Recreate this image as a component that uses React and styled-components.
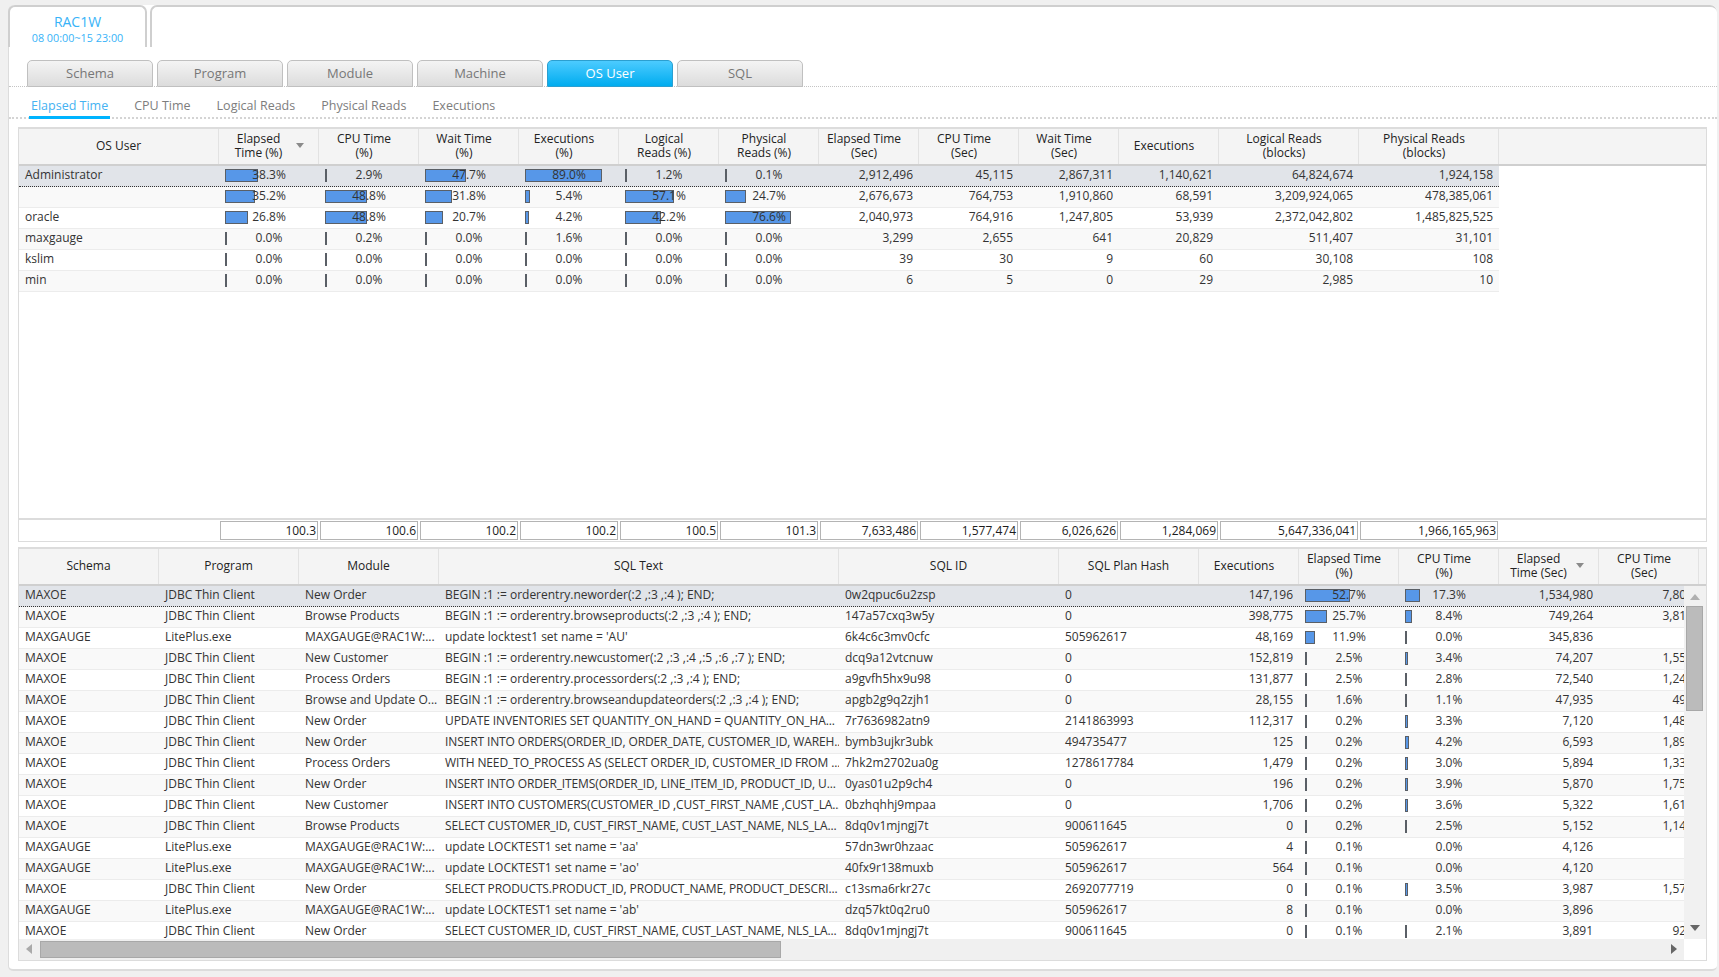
import styled, {createGlobalStyle} from "styled-components";

const GlobalStyle = createGlobalStyle`
  html, body {
    margin: 0;
    padding: 0;
    background: #f0f0f0;
    overflow: hidden;
  }
  * {
    box-sizing: border-box;
  }
`

const Page = styled.div`
  position: relative;
  width: 1719px;
  height: 977px;
  font-family: "Open Sans", "Noto Sans", sans-serif;
  font-size: 12px;
  color: #333;
`

const Panel = styled.div`
  position: absolute;
  left: 8px;
  top: 5px;
  width: 1709px;
  height: 966px;
  background: white;
  border-left: 1px solid #dcdcdc;
  border-bottom: 2px solid #dcdcdc;
  border-radius: 6px 6px 5px 5px;
`

const InstanceStrip = styled.div`
  display: flex;
  height: 42px;
  margin-left: -1px;
`

const InstanceTab = styled.div`
  width: 139px;
  height: 42px;
  border: 2px solid #cfcfcf;
  border-bottom: none;
  border-radius: 7px 7px 0 0;
  background: white;
  text-align: center;
  color: #38b3f8;
`

const InstanceName = styled.div`
  margin-top: 6px;
  font-size: 14px;
  line-height: 18px;
`

const InstanceRange = styled.div`
  font-size: 10.8px;
  line-height: 13px;
`

const InstanceRest = styled.div`
  flex: 1;
  margin-left: 3px;
  border-top: 2px solid #cfcfcf;
  border-left: 2px solid #cfcfcf;
  border-radius: 7px 7px 0 0;
`

const ViewTabs = styled.div`
  display: flex;
  gap: 4px;
  height: 27px;
  margin-top: 13px;
  padding-left: 18px;
  border-bottom: 1px dotted #c4c4c4;
`

const ViewTab = styled.div`
  width: 126px;
  height: 27px;
  line-height: 25px;
  text-align: center;
  font-size: 13px;
  border: 1px solid ${props => props.$active ? "#2b9fd0" : "#c0c0c0"};
  border-radius: 5px 5px 0 0;
  color: ${props => props.$active ? "white" : "#777"};
  background: ${props => props.$active
    ? "linear-gradient(#4ccbff, #00acef)"
    : "linear-gradient(#f4f4f4, #dcdcdc)"};
`

const MetricTabs = styled.div`
  display: flex;
  height: 32px;
  padding-left: 20px;
  border-bottom: 2px dotted #d4d4d4;
`

const MetricTab = styled.div`
  height: 32px;
  margin-right: 22px;
  padding: 0 2px;
  line-height: 37px;
  font-size: 12.5px;
  color: ${props => props.$active ? "#45b2f2" : "#7d7d7d"};
  border-bottom: 3px solid ${props => props.$active ? "#00b4ff" : "transparent"};
`

const Grid = styled.div`
  position: relative;
  display: flex;
  flex-direction: column;
  width: 1689px;
  height: ${props => props.$h}px;
  margin: ${props => props.$top}px 0 0 9px;
  background: white;
  border: 1px solid #dcdcdc;
  border-top: 2px solid #dcdcdc;
  overflow: hidden;
`

const HeaderRow = styled.div`
  display: flex;
  flex: none;
  height: 37px;
  background: #f4f4f4;
  border-bottom: 2px solid #cfcfcf;
`

const HeaderCell = styled.div`
  position: relative;
  flex: none;
  width: ${props => props.$w}px;
  height: 35px;
  padding-right: ${props => props.$sorted ? 20 : props.$numeric ? 9 : 0}px;
  padding-bottom: 2px;
  display: flex;
  align-items: center;
  justify-content: center;
  text-align: center;
  line-height: 14px;
  color: #222;
  border-right: ${props => props.$blank ? "none" : "1px solid #e2e2e2"};
`

const SortArrow = styled.span`
  position: absolute;
  left: 77px;
  top: 14px;
  width: 0;
  height: 0;
  border-left: 4px solid transparent;
  border-right: 4px solid transparent;
  border-top: 5px solid #8a8a8a;
`

const Row = styled.div`
  position: relative;
  display: flex;
  width: ${props => props.$w}px;
  height: 21px;
  flex: none;
  line-height: 17px;
  background: ${props => props.$selected ? "#e1e4e9" : props.$odd ? "#f9f9f9" : "white"};
  border-bottom: ${props => props.$selected ? "1px dotted #333" : "1px solid #ececec"};
  &::before {
    content: "";
    display: ${props => props.$selected ? "block" : "none"};
    position: absolute;
    left: 0;
    right: 0;
    top: -1px;
    border-top: 1px dotted #333;
  }
`

const Cell = styled.div`
  position: relative;
  flex: none;
  width: ${props => props.$w}px;
  padding: 0 6px;
  white-space: nowrap;
  overflow: hidden;
  text-align: ${props => props.$right ? "right" : "left"};
  letter-spacing: ${props => props.$tight ? "-0.12px" : "normal"};
`

const BarCell = styled.div`
  position: relative;
  flex: none;
  width: ${props => props.$w}px;
  text-align: center;
`

const Bar = styled.div`
  position: absolute;
  left: 6px;
  top: 3px;
  height: 13px;
  background: #5797e8;
  border: 1px solid #5a5f66;
`

const BarValue = styled.span`
  position: relative;
`

const GridBody = styled.div`
  flex: 1;
  min-height: 0;
  overflow: hidden;
`

const SummaryRow = styled.div`
  display: flex;
  flex: none;
  height: 23px;
  padding-top: 1px;
  border-top: 2px solid #dcdcdc;
`

const SummaryGap = styled.div`
  flex: none;
  width: ${props => props.$w}px;
`

const SummaryCell = styled.div`
  flex: none;
  width: ${props => props.$w}px;
  padding-left: 1px;
`

const SummaryBox = styled.div`
  width: ${props => props.$w - 2}px;
  height: 19px;
  line-height: 17px;
  padding-right: 1px;
  text-align: right;
  color: #1c1c1c;
  font-weight: 500;
  border: 1px solid #b4b4b4;
`

const ScrollArea = styled.div`
  display: flex;
  flex: none;
  height: 353px;
`

const Viewport = styled.div`
  width: 1665px;
  height: 353px;
  overflow: hidden;
`

const VTrack = styled.div`
  position: relative;
  flex: 1;
  background: #f1f1f1;
`

const VThumb = styled.div`
  position: absolute;
  left: 2px;
  top: 20px;
  width: 17px;
  height: 105px;
  background: #bbbbbb;
  border: 1px solid #a8a8a8;
`

const HTrackRow = styled.div`
  display: flex;
  flex: none;
  height: 21px;
`

const HTrack = styled.div`
  position: relative;
  width: 1665px;
  background: #f0f0f0;
`

const HThumb = styled.div`
  position: absolute;
  left: 21px;
  top: 2px;
  width: 741px;
  height: 17px;
  background: #bbbbbb;
  border: 1px solid #a8a8a8;
`

const ArrowIcon = styled.svg`
  position: absolute;
  left: ${props => props.$x}px;
  top: ${props => props.$y}px;
`

const Arrow = ({x, y, dir, color}) => {
    const points = {
        up: "0,6 5,0 10,6",
        down: "0,0 10,0 5,6",
        left: "6,0 6,10 0,5",
        right: "0,0 6,5 0,10",
    }[dir];
    return (
        <ArrowIcon $x={x} $y={y} width="10" height="10" viewBox="0 0 10 10">
            <polygon points={points} fill={color}/>
        </ArrowIcon>
    )
}

const viewTabs = ["Schema", "Program", "Module", "Machine", "OS User", "SQL"];
const metricTabs = ["Elapsed Time", "CPU Time", "Logical Reads", "Physical Reads", "Executions"];

const userHeaders = [
    {w: 200, lines: ["OS User"]},
    {w: 100, lines: ["Elapsed", "Time (%)"], sorted: true},
    {w: 100, lines: ["CPU Time", "(%)"], numeric: true},
    {w: 100, lines: ["Wait Time", "(%)"], numeric: true},
    {w: 100, lines: ["Executions", "(%)"], numeric: true},
    {w: 100, lines: ["Logical", "Reads (%)"], numeric: true},
    {w: 100, lines: ["Physical", "Reads (%)"], numeric: true},
    {w: 100, lines: ["Elapsed Time", "(Sec)"], numeric: true},
    {w: 100, lines: ["CPU Time", "(Sec)"], numeric: true},
    {w: 100, lines: ["Wait Time", "(Sec)"], numeric: true},
    {w: 100, lines: ["Executions"], numeric: true},
    {w: 140, lines: ["Logical Reads", "(blocks)"], numeric: true},
    {w: 140, lines: ["Physical Reads", "(blocks)"], numeric: true},
];

const userRows = [
    ["Administrator", [38.3, 2.9, 47.7, 89.0, 1.2, 0.1], ["2,912,496", "45,115", "2,867,311", "1,140,621", "64,824,674", "1,924,158"]],
    ["", [35.2, 48.8, 31.8, 5.4, 57.1, 24.7], ["2,676,673", "764,753", "1,910,860", "68,591", "3,209,924,065", "478,385,061"]],
    ["oracle", [26.8, 48.8, 20.7, 4.2, 42.2, 76.6], ["2,040,973", "764,916", "1,247,805", "53,939", "2,372,042,802", "1,485,825,525"]],
    ["maxgauge", [0, 0.2, 0, 1.6, 0, 0], ["3,299", "2,655", "641", "20,829", "511,407", "31,101"]],
    ["kslim", [0, 0, 0, 0, 0, 0], ["39", "30", "9", "60", "30,108", "108"]],
    ["min", [0, 0, 0, 0, 0, 0], ["6", "5", "0", "29", "2,985", "10"]],
];

const userTotals = ["100.3", "100.6", "100.2", "100.2", "100.5", "101.3", "7,633,486", "1,577,474", "6,026,626", "1,284,069", "5,647,336,041", "1,966,165,963"];

const sqlHeaders = [
    {w: 140, lines: ["Schema"]},
    {w: 140, lines: ["Program"]},
    {w: 140, lines: ["Module"]},
    {w: 400, lines: ["SQL Text"]},
    {w: 220, lines: ["SQL ID"]},
    {w: 140, lines: ["SQL Plan Hash"]},
    {w: 100, lines: ["Executions"], numeric: true},
    {w: 100, lines: ["Elapsed Time", "(%)"], numeric: true},
    {w: 100, lines: ["CPU Time", "(%)"], numeric: true},
    {w: 100, lines: ["Elapsed", "Time (Sec)"], sorted: true},
    {w: 100, lines: ["CPU Time", "(Sec)"], numeric: true},
    {w: 7, lines: [], blank: true},
];

const JDBC = "JDBC Thin Client";
const LITE = "LitePlus.exe";
const GAUGE_MODULE = "MAXGAUGE@RAC1W:...";

const sqlRows = [
    ["MAXOE", JDBC, "New Order", "BEGIN :1 := orderentry.neworder(:2 ,:3 ,:4 ); END;", "0w2qpuc6u2zsp", "0", "147,196", 52.7, 17.3, "1,534,980", "7,801"],
    ["MAXOE", JDBC, "Browse Products", "BEGIN :1 := orderentry.browseproducts(:2 ,:3 ,:4 ); END;", "147a57cxq3w5y", "0", "398,775", 25.7, 8.4, "749,264", "3,810"],
    ["MAXGAUGE", LITE, GAUGE_MODULE, "update locktest1 set name = 'AU'", "6k4c6c3mv0cfc", "505962617", "48,169", 11.9, 0, "345,836", "0"],
    ["MAXOE", JDBC, "New Customer", "BEGIN :1 := orderentry.newcustomer(:2 ,:3 ,:4 ,:5 ,:6 ,:7 ); END;", "dcq9a12vtcnuw", "0", "152,819", 2.5, 3.4, "74,207", "1,552"],
    ["MAXOE", JDBC, "Process Orders", "BEGIN :1 := orderentry.processorders(:2 ,:3 ,:4 ); END;", "a9gvfh5hx9u98", "0", "131,877", 2.5, 2.8, "72,540", "1,243"],
    ["MAXOE", JDBC, "Browse and Update O...", "BEGIN :1 := orderentry.browseandupdateorders(:2 ,:3 ,:4 ); END;", "apgb2g9q2zjh1", "0", "28,155", 1.6, 1.1, "47,935", "494"],
    ["MAXOE", JDBC, "New Order", "UPDATE INVENTORIES SET QUANTITY_ON_HAND = QUANTITY_ON_HA...", "7r7636982atn9", "2141863993", "112,317", 0.2, 3.3, "7,120", "1,482"],
    ["MAXOE", JDBC, "New Order", "INSERT INTO ORDERS(ORDER_ID, ORDER_DATE, CUSTOMER_ID, WAREH...", "bymb3ujkr3ubk", "494735477", "125", 0.2, 4.2, "6,593", "1,893"],
    ["MAXOE", JDBC, "Process Orders", "WITH NEED_TO_PROCESS AS (SELECT ORDER_ID, CUSTOMER_ID FROM ...", "7hk2m2702ua0g", "1278617784", "1,479", 0.2, 3.0, "5,894", "1,331"],
    ["MAXOE", JDBC, "New Order", "INSERT INTO ORDER_ITEMS(ORDER_ID, LINE_ITEM_ID, PRODUCT_ID, U...", "0yas01u2p9ch4", "0", "196", 0.2, 3.9, "5,870", "1,752"],
    ["MAXOE", JDBC, "New Customer", "INSERT INTO CUSTOMERS(CUSTOMER_ID ,CUST_FIRST_NAME ,CUST_LA...", "0bzhqhhj9mpaa", "0", "1,706", 0.2, 3.6, "5,322", "1,614"],
    ["MAXOE", JDBC, "Browse Products", "SELECT CUSTOMER_ID, CUST_FIRST_NAME, CUST_LAST_NAME, NLS_LA...", "8dq0v1mjngj7t", "900611645", "0", 0.2, 2.5, "5,152", "1,142"],
    ["MAXGAUGE", LITE, GAUGE_MODULE, "update LOCKTEST1 set name = 'aa'", "57dn3wr0hzaac", "505962617", "4", 0.1, null, "4,126", "0"],
    ["MAXGAUGE", LITE, GAUGE_MODULE, "update LOCKTEST1 set name = 'ao'", "40fx9r138muxb", "505962617", "564", 0.1, null, "4,120", "0"],
    ["MAXOE", JDBC, "New Order", "SELECT PRODUCTS.PRODUCT_ID, PRODUCT_NAME, PRODUCT_DESCRI...", "c13sma6rkr27c", "2692077719", "0", 0.1, 3.5, "3,987", "1,571"],
    ["MAXGAUGE", LITE, GAUGE_MODULE, "update LOCKTEST1 set name = 'ab'", "dzq57kt0q2ru0", "505962617", "8", 0.1, null, "3,896", "0"],
    ["MAXOE", JDBC, "New Order", "SELECT CUSTOMER_ID, CUST_FIRST_NAME, CUST_LAST_NAME, NLS_LA...", "8dq0v1mjngj7t", "900611645", "0", 0.1, 2.1, "3,891", "923"],
];

const Header = ({columns}) => (
    <HeaderRow>
        {columns.map((col, i) => (
            <HeaderCell key={i} $w={col.w} $sorted={col.sorted} $numeric={col.numeric} $blank={col.blank}>
                <div>
                    {col.lines.map(line => <div key={line}>{line}</div>)}
                </div>
                {col.sorted && <SortArrow/>}
            </HeaderCell>
        ))}
    </HeaderRow>
)

const PercentCell = ({value}) => {
    const shown = value === null ? 0 : value;
    return (
        <BarCell $w={100}>
            {value !== null && <Bar style={{width: Math.max(2, Math.round(shown * 0.86))}}/>}
            <BarValue>{shown.toFixed(1)}%</BarValue>
        </BarCell>
    )
}

const App = () => {
    return (
        <Page>
            <GlobalStyle/>
            <Panel>
                <InstanceStrip>
                    <InstanceTab>
                        <InstanceName>RAC1W</InstanceName>
                        <InstanceRange>08 00:00~15 23:00</InstanceRange>
                    </InstanceTab>
                    <InstanceRest/>
                </InstanceStrip>

                <ViewTabs>
                    {viewTabs.map(tab => (
                        <ViewTab key={tab} $active={tab === "OS User"}>{tab}</ViewTab>
                    ))}
                </ViewTabs>

                <MetricTabs>
                    {metricTabs.map(tab => (
                        <MetricTab key={tab} $active={tab === "Elapsed Time"}>{tab}</MetricTab>
                    ))}
                </MetricTabs>

                <Grid $h={415} $top={8}>
                    <Header columns={userHeaders}/>
                    <GridBody>
                        {userRows.map((row, i) => (
                            <Row key={i} $w={1480} $selected={i === 0} $odd={i % 2 === 1}>
                                <Cell $w={200}>{row[0]}</Cell>
                                {row[1].map((value, j) => <PercentCell key={j} value={value}/>)}
                                {row[2].map((value, j) => (
                                    <Cell key={j} $w={j > 3 ? 140 : 100} $right>{value}</Cell>
                                ))}
                            </Row>
                        ))}
                    </GridBody>
                    <SummaryRow>
                        <SummaryGap $w={200}/>
                        {userTotals.map((value, i) => {
                            const w = i > 9 ? 140 : 100;
                            return (
                                <SummaryCell key={i} $w={w}>
                                    <SummaryBox $w={w}>{value}</SummaryBox>
                                </SummaryCell>
                            )
                        })}
                    </SummaryRow>
                </Grid>

                <Grid $h={414} $top={5}>
                    <Header columns={sqlHeaders}/>
                    <ScrollArea>
                        <Viewport>
                            {sqlRows.map((row, i) => (
                                <Row key={i} $w={1665} $selected={i === 0} $odd={i % 2 === 1}>
                                    <Cell $w={140}>{row[0]}</Cell>
                                    <Cell $w={140}>{row[1]}</Cell>
                                    <Cell $w={140}>{row[2]}</Cell>
                                    <Cell $w={400} $tight={row[3].endsWith("...")}>{row[3]}</Cell>
                                    <Cell $w={220}>{row[4]}</Cell>
                                    <Cell $w={140}>{row[5]}</Cell>
                                    <Cell $w={100} $right>{row[6]}</Cell>
                                    <PercentCell value={row[7]}/>
                                    <PercentCell value={row[8]}/>
                                    <Cell $w={100} $right>{row[9]}</Cell>
                                    <Cell $w={100} $right>{row[10]}</Cell>
                                </Row>
                            ))}
                        </Viewport>
                        <VTrack>
                            <Arrow x={6} y={8} dir="up" color="#b0b0b0"/>
                            <VThumb/>
                            <Arrow x={6} y={339} dir="down" color="#666"/>
                        </VTrack>
                    </ScrollArea>
                    <HTrackRow>
                        <HTrack>
                            <Arrow x={7} y={5} dir="left" color="#aaa"/>
                            <HThumb/>
                            <Arrow x={1652} y={5} dir="right" color="#666"/>
                        </HTrack>
                    </HTrackRow>
                </Grid>
            </Panel>
        </Page>
    )
}

export default App
